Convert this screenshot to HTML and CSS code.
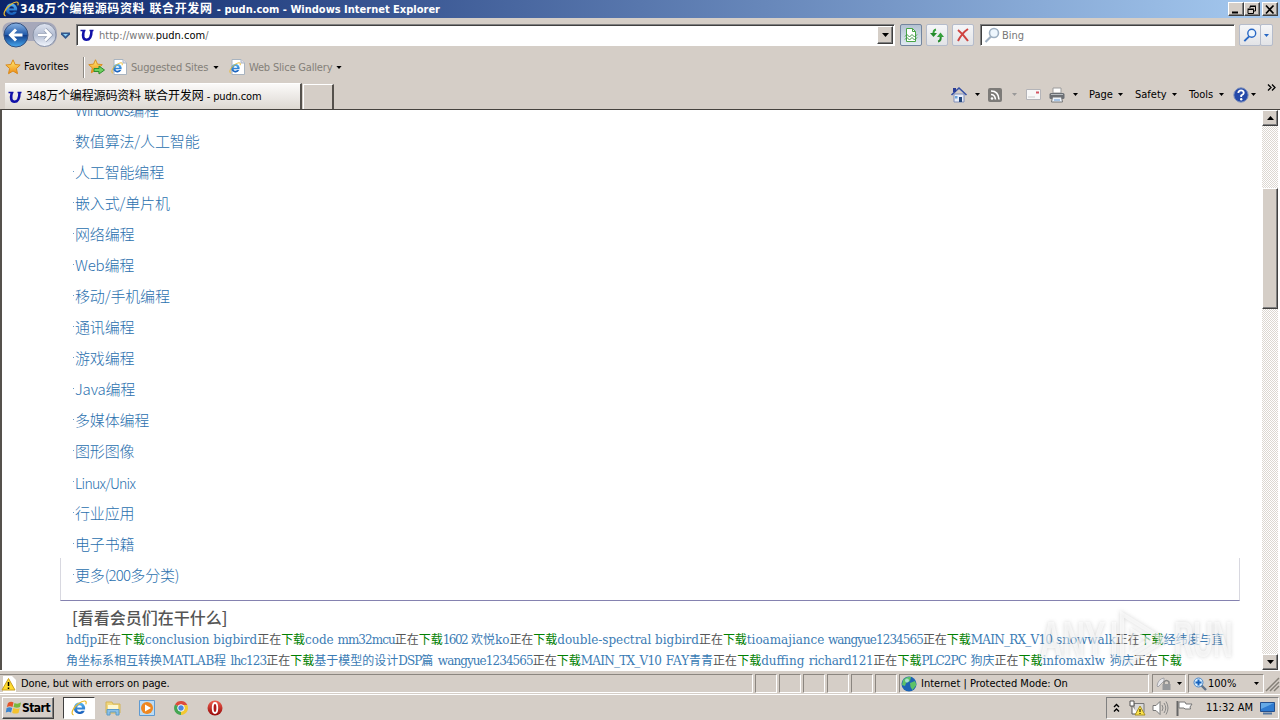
FILE: index.html
```
<!DOCTYPE html>
<html lang="zh-CN">
<head>
  <meta charset="UTF-8">
  <title>348万个编程源码资料 联合开发网 - pudn.com</title>
  <link rel="stylesheet" href="styles.css">
</head>
<body>
  <!-- shared icons -->
  <svg class="defs" width="0" height="0">
    <defs>
      <linearGradient id="blue" x1="0" y1="0" x2="0" y2="1"><stop offset="0" stop-color="#8ab4e4"/><stop offset=".48" stop-color="#245cab"/><stop offset=".52" stop-color="#123f8c"/><stop offset="1" stop-color="#48aaf0"/></linearGradient>
      <linearGradient id="pale" x1="0" y1="0" x2="0" y2="1"><stop offset="0" stop-color="#dfe5f1"/><stop offset=".5" stop-color="#b3bdd2"/><stop offset="1" stop-color="#f4f8ff"/></linearGradient>
      <linearGradient id="gold" x1="0" y1="0" x2="0" y2="1"><stop offset="0" stop-color="#fff07a"/><stop offset="1" stop-color="#f08a10"/></linearGradient>
      <linearGradient id="red" x1="0" y1="0" x2="0" y2="1"><stop offset="0" stop-color="#f06050"/><stop offset="1" stop-color="#960808"/></linearGradient>
      <linearGradient id="sky" x1="0" y1="0" x2="0" y2="1"><stop offset="0" stop-color="#58b8f4"/><stop offset="1" stop-color="#1459b8"/></linearGradient>
    </defs>
    <symbol id="ie" viewBox="0 0 16 16">
      <path fill-rule="evenodd" d="M8.500 2.500a5.700 5.700 0 0 1 5.600 7H6q.4 2.300 2.500 2.300 1.500 0 2.200-1.100h3.100a5.700 5.700 0 1 1-5.300-8.200M6.100 7.500h5Q10.700 5.200 8.600 5.200T6.100 7.500" fill="url(#sky)"/>
      <path d="M2.600 15C-.8 14 2 7.500 7 4S16.500-.6 14.800 4.400" fill="none" stroke="#e9b92e" stroke-width="1.200"/>
    </symbol>
    <symbol id="iepage" viewBox="0 0 16 16">
      <path d="M3 .5h9l3.500 3.500v11.500H3z" fill="#fff" stroke="#a9b4c0"/>
      <path d="M12 .5V4h3.500" fill="#dde" stroke="#a9b4c0"/>
      <use href="#ie" x="0" y="3" width="12" height="12"/>
    </symbol>
    <symbol id="star" viewBox="0 0 16 16">
      <path d="M8 .8l2.100 4.700 5.100.5-3.800 3.500 1.100 5.200L8 12l-4.500 2.700 1.100-5.200L.8 6l5.100-.5z" fill="url(#gold)" stroke="#d98a1c"/>
    </symbol>
    <symbol id="u" viewBox="0 0 14 14">
      <path d="M.5 2.500h5M9.500 2.500h4" fill="none" stroke="#1010a8" stroke-width="1.500"/>
      <path d="M3.800 2.500Q1.500 11.800 6.500 11.800T11.500 2.500" fill="none" stroke="#1010a8" stroke-width="2.600"/>
    </symbol>
    <symbol id="lens" viewBox="0 0 16 16">
      <path d="M7 9.500L1.500 15" stroke="currentColor" stroke-width="2.200"/>
      <circle cx="10" cy="6" r="4.500" fill="#eef6fd" stroke="currentColor" stroke-width="1.600"/>
    </symbol>
    <symbol id="down" viewBox="0 0 7 4"><path d="M0 0h7L3.500 4z" fill="currentColor"/></symbol>
  </svg>

  <header class="titlebar">
    <svg class="i16"><use href="#ie"/></svg>
    <h1>348万个编程源码资料 联合开发网 <span class="latin">- pudn.com - Windows Internet Explorer</span></h1>
    <div class="window-buttons">
      <button class="raised"><svg width="10" height="9"><path d="M1 7.500h6" stroke="#000" stroke-width="2"/></svg></button>
      <button class="raised"><svg width="10" height="9"><path d="M3 3V1.500h5.500V6H7M3 1h6M1 4.500h5.500V8.500H1zM.5 4h6.500" fill="none" stroke="#000"/></svg></button>
      <button class="raised close"><svg width="10" height="9"><path d="M1 .5l7.500 8M8.500.5L1 8.500" stroke="#000" stroke-width="1.700"/></svg></button>
    </div>
  </header>

  <nav class="navbar">
    <svg class="travel" width="74" height="30" viewBox="0 0 74 30">
      <path d="M14 2h30q12 0 12 12T44 27q-7 0-10-6h-8q-3 6-12 6T2 14 14 2" fill="#a6a8ba"/>
      <circle cx="15" cy="15" r="12" fill="url(#blue)" stroke="#34517f"/>
      <circle cx="43.500" cy="15" r="11.500" fill="url(#pale)" stroke="#8992a6"/>
      <path d="M21.500 15H9.500M15 9.500L9.500 15l5.500 5.500" fill="none" stroke="#fff" stroke-width="3"/>
      <path d="M37 15h12M44 9.500l5.500 5.500-5.500 5.500" fill="none" stroke="#8f9ab0" stroke-width="4"/>
      <path d="M37 15h12M44 9.500l5.500 5.500-5.500 5.500" fill="none" stroke="#fff" stroke-width="2.600"/>
      <path d="M60 12.500h9v2l-4.500 4.500-4.500-4.500z" fill="#31578c"/><path d="M62 14h5l-2.500 2.500z" fill="#8ad0f8"/>
    </svg>
    <div class="address sunken">
      <svg class="i14"><use href="#u"/></svg>
      <span class="url">http://www.<b>pudn.com</b>/</span>
      <button class="raised drop"><svg width="7" height="4"><use href="#down"/></svg></button>
    </div>
    <button class="tool pressed"><svg width="16" height="16"><path d="M3.500 1.500h6l3 3v10h-9z" fill="#fff" stroke="#48a545"/><path d="M9.500 1.500v3h3" fill="none" stroke="#48a545"/><path d="M2 9.500l2-2 2.500 2.500L9 7.500l2.500 2.500L14 7.500M2 12.500l2-2L6.500 13 9 10.500l2.500 2.500 2.500-2.500" fill="none" stroke="#3f9845"/></svg></button>
    <button class="tool"><svg width="16" height="16"><path d="M7 2.500Q4 3 4.500 8" fill="none" stroke="#35a03b" stroke-width="2"/><path d="M1 6h7L4.500 10z" fill="#258a2c"/><path d="M9 14.500q3.500-.5 2.500-6" fill="none" stroke="#258a2c" stroke-width="2"/><path d="M8 10h7l-3.500-4.500z" fill="#35a03b"/></svg></button>
    <button class="tool"><svg width="16" height="16"><path d="M3 3q5 4 10 11M13 2Q7 6 3 14" fill="none" stroke="#cf4340" stroke-width="2"/></svg></button>
    <div class="search sunken">
      <svg class="i16"><use href="#lens"/></svg>
      <span>Bing</span>
    </div>
    <div class="search-go">
      <button class="tool"><svg class="i14"><use href="#lens"/></svg></button>
      <button class="tool narrow"><svg width="5" height="3"><use href="#down"/></svg></button>
    </div>
  </nav>

  <div class="favorites">
    <svg class="i16"><use href="#star"/></svg>
    <span class="fav-label">Favorites</span>
    <i class="divider"></i>
    <svg class="add" width="17" height="16" viewBox="0 0 17 16"><use href="#star" width="15" height="15"/><path d="M6 9.500h5V7l5.500 4-5.500 4v-2.500H6z" fill="#6fd05f" stroke="#2c8e2d"/></svg>
    <svg class="i16"><use href="#iepage"/></svg>
    <span class="link suggested">Suggested Sites</span>
    <svg width="6" height="3"><use href="#down"/></svg>
    <svg class="i16 slice"><use href="#iepage"/></svg>
    <span class="link gallery">Web Slice Gallery</span>
    <svg width="6" height="3"><use href="#down"/></svg>
  </div>

  <div class="tabs">
    <div class="tab">
      <svg class="i14"><use href="#u"/></svg>
      <span>348万个编程源码资料 联合开发网 <span class="latin">- pudn.com</span></span>
    </div>
    <div class="new-tab"></div>
    <div class="commands">
      <svg width="16" height="16"><path d="M3 7h10v8H3z" fill="#e9eefb" stroke="#8290b8"/><path d="M.5 8L8 1l7.500 7" fill="none" stroke="#3550a5" stroke-width="1.600"/><path d="M2 1h3v4H2z" fill="#2a3d95"/><path d="M8 10h3v5H8z" fill="#24477c"/><path d="M4 9h2.500v2.500H4z" fill="#6aa4d9"/></svg>
      <svg class="arrow a-home" width="5" height="3"><use href="#down"/></svg>
      <svg class="feed" width="14" height="14"><rect width="14" height="14" rx="2" fill="#7d7b78"/><circle cx="4" cy="10.500" r="1.300" fill="#fff"/><path d="M3 6.500q4 0 4.500 5M3 3q7.500 0 8 8.500" fill="none" stroke="#fff" stroke-width="1.600"/></svg>
      <svg class="arrow dim a-feed" width="5" height="3"><use href="#down"/></svg>
      <svg class="mail" width="15" height="12"><path d="M.5.5h14v10H.5z" fill="#f8f8f8" stroke="#b4b4b8"/><path d="M2 8h7" stroke="#ccc"/><path d="M10 2.500h3v2h-3z" fill="#d45563"/></svg>
      <svg class="print" width="16" height="16"><path d="M4 1h8v5H4z" fill="#fff" stroke="#9b9b9b"/><rect x=".5" y="6" width="15" height="6" rx="1.500" fill="#6b6f75"/><path d="M2 7.500h12" stroke="#b9bdc0"/><path d="M3.500 10h9l1 5h-11z" fill="#eef4fb" stroke="#777"/><path d="M5 13h6" stroke="#5f93ce"/></svg>
      <svg class="arrow a-print" width="5" height="3"><use href="#down"/></svg>
      <span class="menu page">Page</span><svg class="arrow" width="5" height="3"><use href="#down"/></svg>
      <span class="menu safety">Safety</span><svg class="arrow" width="5" height="3"><use href="#down"/></svg>
      <span class="menu tools">Tools</span><svg class="arrow" width="5" height="3"><use href="#down"/></svg>
      <svg class="help" width="16" height="16"><circle cx="8" cy="8" r="7.200" fill="#254aa9" stroke="#8394bd"/><path d="M5.300 6q.2-2.700 2.800-2.700T10.800 6Q10.700 7.200 8.200 8.500v1.500" fill="none" stroke="#fff" stroke-width="1.800"/><circle cx="8.200" cy="12.200" r="1.200" fill="#fff"/></svg>
      <svg class="arrow a-help" width="5" height="3"><use href="#down"/></svg>
      <svg class="more" width="9" height="7"><path d="M1 .5l3 3-3 3M5 .5l3 3-3 3" fill="none" stroke="#000" stroke-width="1.300"/></svg>
    </div>
  </div>

  <div class="viewport">
    <main class="page-content">
      <ul class="categories">
        <li><a><span class="windows">Windows</span>编程</a></li>
        <li><a>数值算法/人工智能</a></li>
        <li><a>人工智能编程</a></li>
        <li><a>嵌入式/单片机</a></li>
        <li><a>网络编程</a></li>
        <li><a>Web编程</a></li>
        <li><a>移动/手机编程</a></li>
        <li><a>通讯编程</a></li>
        <li><a>游戏编程</a></li>
        <li><a>Java编程</a></li>
        <li><a>多媒体编程</a></li>
        <li><a>图形图像</a></li>
        <li><a class="linux">Linux/Unix</a></li>
        <li><a>行业应用</a></li>
        <li><a>电子书籍</a></li>
        <li class="last"><a>更多<span class="count">(200</span>多分类)</a></li>
      </ul>
      <h2>[看看会员们在干什么]</h2>
      <div class="activity">
        <p><a>hdfjp</a>正在<em>下载</em><a>conclusion</a> <a>bigbird</a>正在<em>下载</em><a>code</a> <a class="t2">mm32mcu</a>正在<em>下载</em><a class="t3">1602</a> <a>欢悦ko</a>正在<em>下载</em><a>double-spectral</a> <a>bigbird</a>正在<em>下载</em><a>tioamajiance</a> <a class="t2">wangyue1234565</a>正在<em>下载</em><a class="t1">MAIN_RX_V10</a> <a>snowwalk</a>正在<em>下载</em><a>经纬度与直</a></p>
        <p class="second"><a>角坐标系相互转换<span class="t0">MATLAB</span>程</a> <a class="t2">lhc123</a>正在<em>下载</em><a>基于模型的设计<span class="t2">DSP</span>篇</a> <a class="t2">wangyue1234565</a>正在<em>下载</em><a class="t1">MAIN_TX_V10</a> <a>FAY青青</a>正在<em>下载</em><a>duffing</a> <a class="t0">richard121</a>正在<em>下载</em><a class="t2">PLC2PC</a> <a>狗庆</a>正在<em>下载</em><a>infomaxlw</a> <a>狗庆</a>正在<em>下载</em></p>
      </div>
    </main>
    <div class="scrollbar">
      <button class="raised"><svg width="7" height="4"><path d="M0 4h7L3.500 0z"/></svg></button>
      <div class="thumb raised"></div>
      <button class="raised"><svg width="7" height="4"><use href="#down"/></svg></button>
    </div>
    <div class="watermark">
      <span class="any">ANY</span>
      <svg width="62" height="60" viewBox="0 0 62 60"><path d="M6 12v36M14 50V4l42 26-36 23" fill="none" stroke="currentColor" stroke-width="4"/><path d="M24 20v20l16-10z" fill="none" stroke="currentColor" stroke-width="3"/></svg>
      <span class="run">RUN</span>
    </div>
  </div>

  <footer class="statusbar">
    <div class="cell message">
      <svg width="16" height="16"><path d="M2 0h9l4 4v12H2z" fill="#fff"/><path d="M7.500 2.500L14 14H1z" fill="#ffdb2e" stroke="#c89e20"/><path d="M7.500 6v4M7.500 11.500v1.500" stroke="#000" stroke-width="1.500"/></svg>
      <span>Done, but with errors on page.</span>
    </div>
    <div class="cell"></div><div class="cell"></div><div class="cell"></div><div class="cell"></div><div class="cell"></div><div class="cell"></div>
    <div class="cell zone">
      <svg width="16" height="16"><circle cx="8" cy="8" r="7.500" fill="#1d63b4"/><path d="M2 4q4-4 8-3l-1 4-4 2-1 3-3-1zM9 7l5-2 1.500 4-4 5-2-3z" fill="#5dc267"/><circle cx="6" cy="4.500" r="2" fill="#c4ecf5" opacity=".7"/></svg>
      <span>Internet | Protected Mode: On</span>
    </div>
    <div class="cell lock">
      <svg width="16" height="16"><path d="M1 10Q2 3 8 2v3L2 11z" fill="#e8e8ec" stroke="#a4a4a8"/><path d="M8 8V6q2.500-3 5 0v2" fill="none" stroke="#858585" stroke-width="1.500"/><path d="M6.500 8h8v6h-8z" fill="#96989b"/></svg>
      <svg width="5" height="3"><use href="#down"/></svg>
    </div>
    <div class="cell zoom">
      <svg width="14" height="14"><path d="M8 8l5 5" stroke="#617289" stroke-width="2.400"/><circle cx="5.500" cy="5.500" r="4.500" fill="#d6ecfd" stroke="#4a86c8"/><path d="M5.500 2.500v6M2.500 5.500h6" stroke="#1762bd" stroke-width="2"/></svg>
      <span>100%</span>
      <svg width="5" height="3"><use href="#down"/></svg>
    </div>
    <svg class="grip" width="14" height="14"><path d="M1 14L14 1M5 14l9-9M9 14l5-5" stroke="#858078" stroke-width="1.500"/></svg>
  </footer>

  <footer class="taskbar">
    <button class="start raised">
      <svg width="16" height="15"><path d="M2 3q3-2 5.500-.5L6.500 7Q4 5.500.8 7z" fill="#e35429"/><path d="M8.500 3q3 1.500 6.500-.5L14 7q-3 1.500-6.500 0z" fill="#79b83b"/><path d="M.6 8q3-1.500 5.600 0L5 12.500Q3 11-.2 12.500z" fill="#3b84cf"/><path d="M7.200 8q3 1.500 6.500.3L12.500 13q-3.500 1.300-6.300-.3z" fill="#f4c22d"/></svg>
      <span>Start</span>
    </button>
    <div class="task active"><svg class="i16"><use href="#ie"/></svg></div>
    <svg class="app" width="16" height="16"><path d="M1 2h6l1 2h7v9H1z" fill="#f1d77c" stroke="#d3b458"/><path d="M3 5h10v4H3z" fill="#fdf7d2"/><path d="M2 15V9.500h12V15h-3v-3H5v3z" fill="#8bc1e8" stroke="#5b9bc9"/></svg>
    <svg class="app media" width="16" height="16"><path d="M.5.5h15v15H.5z" fill="#bcdcf5" stroke="#5f9ad1"/><circle cx="8" cy="8" r="6" fill="#ef8720"/><path d="M6 4.500l6 3.500-6 3.500z" fill="#fff"/></svg>
    <svg class="app chrome" width="16" height="16"><path d="M8 8L2 4.500A7 7 0 0 1 14.300 5H8z" fill="#dd4b3c"/><path d="M8 8V5h6.300A7 7 0 0 1 8 15z" fill="#f3c831"/><path d="M8 8v7A7 7 0 0 1 2 4.500z" fill="#45a652"/><circle cx="8" cy="8" r="3.300" fill="#4b86e0" stroke="#fff"/></svg>
    <svg class="app opera" width="16" height="16"><circle cx="8" cy="8" r="7.500" fill="url(#red)"/><ellipse cx="8" cy="8" rx="2.300" ry="5" fill="#b01818" stroke="#fff" stroke-width="1.800"/></svg>
    <div class="tray">
      <svg width="7" height="10"><path d="M1 4l2.500-2.500L6 4M1 8.500L3.500 6 6 8.500" fill="none" stroke="#000" stroke-width="1.400"/></svg>
      <svg class="net" width="16" height="16"><path d="M5 3.500h10v9H5z" fill="#d8d8d8" stroke="#777"/><path d="M1 1h4v5H1zM3 6v8h6" fill="#fff" stroke="#555"/><path d="M11 6l5 9H6z" fill="#fde34a" stroke="#a99022"/><path d="M11 9v3M11 13v1" stroke="#000"/></svg>
      <svg class="vol" width="17" height="16"><path d="M1 5.500h3L8 1.500v13l-4-4H1z" fill="#fff" stroke="#777"/><path d="M10 5q2 3 0 6M12 3q3.500 5 0 10M14 1.500q4 6.500 0 13" fill="none" stroke="#888"/></svg>
      <svg class="flag" width="17" height="16"><path d="M1.500 1v15" stroke="#666" stroke-width="2"/><path d="M3 2h6l1 2h6l-2 3 .5 2H9L8 8H3z" fill="#fff" stroke="#777"/></svg>
      <span class="clock">11:32 AM</span>
      <svg class="desk" width="15" height="14"><path d="M.5 1.500h14v9H.5z" fill="#2f7bd0" stroke="#244f8d"/><path d="M1 2h13L1 8z" fill="#64a9e6"/><path d="M3 12.500h9" stroke="#5577a0" stroke-width="2"/></svg>
    </div>
  </footer>
</body>
</html>
```
FILE: styles.css
```
* {
  box-sizing: border-box;
}

body {
  margin: 0;
  width: 1280px;
  height: 720px;
  overflow: hidden;
  display: flex;
  flex-direction: column;
  background: #d5cec7;
  color: #000;
  font: 11px/14px "DejaVu Sans Condensed", "Noto Sans CJK SC", sans-serif;
  white-space: nowrap;
}

svg {
  display: block;
  flex: none;
  overflow: visible;
}

.defs {
  position: absolute;
}

button {
  display: flex;
  align-items: center;
  justify-content: center;
  flex: none;
  padding: 0;
  font: inherit;
  color: inherit;
}

.i14 { width: 14px; height: 14px; }
.i16 { width: 16px; height: 16px; }

.raised {
  background: #d5cec7;
  border: 1px solid;
  border-color: #fff #404040 #404040 #fff;
  box-shadow: inset -1px -1px #808080;
}

.sunken {
  display: flex;
  align-items: center;
  background: #fff;
  border: 1px solid;
  border-color: #808080 #fff #fff #808080;
  box-shadow: inset 1px 1px #404040;
}

/* title bar */
.titlebar {
  display: flex;
  align-items: center;
  height: 18px;
  flex: none;
  padding: 0 2px 0 3px;
  background: linear-gradient(90deg, #0a246a, #a6caf0);
  color: #fff;
}

.titlebar h1 {
  flex: 1;
  margin: 0 0 0 1px;
  font-size: 12px;
  line-height: 18px;
  letter-spacing: .6px;
}

.titlebar .latin {
  font-size: 11px;
  letter-spacing: 0;
}

.window-buttons {
  display: flex;
}

.window-buttons button {
  width: 16px;
  height: 14px;
}

.window-buttons .close {
  margin-left: 2px;
}

/* address row */
.navbar {
  display: flex;
  align-items: center;
  height: 34px;
  flex: none;
  padding-left: 1px;
}

.address {
  width: 819px;
  height: 22px;
  margin-left: 1px;
  padding: 1px 1px 1px 3px;
}

.url {
  flex: 1;
  margin-left: 5px;
  padding-top: 2px;
  color: #777;
}

.url b {
  color: #000;
  font-weight: normal;
}

.drop {
  width: 16px;
  height: 18px;
}

.tool {
  width: 22px;
  height: 22px;
  margin-left: 4px;
  background: linear-gradient(#f5f6f8, #e2e3e6);
  border: 1px solid #b5bccb;
  border-radius: 2px;
}

.tool.pressed {
  background: linear-gradient(#b4c2d2, #dfe9f0);
  border-color: #73859f;
}

.search {
  width: 255px;
  height: 22px;
  margin-left: 6px;
  padding-left: 3px;
  color: #777;
}

.search span {
  margin-left: 2px;
  padding-top: 2px;
}

.search svg {
  color: #9fb0c2;
}

.search-go {
  display: flex;
  margin-left: 4px;
  color: #2767c4;
}

.search-go .tool {
  margin: 0;
}

.search-go .narrow {
  width: 13px;
  margin-left: -1px;
}

.address + .tool {
  margin-left: 5px;
}

/* favorites row */
.favorites {
  display: flex;
  align-items: center;
  height: 30px;
  flex: none;
  padding-left: 5px;
}

.fav-label {
  width: 59px;
  margin-left: 3px;
}

.divider {
  width: 2px;
  height: 21px;
  border-left: 1px solid #8d8983;
  border-right: 1px solid #fff;
}

.add {
  margin: 0 6px 0 3px;
}

.link {
  color: #848079;
  letter-spacing: -.18px;
  padding-top: 1px;
}

.suggested {
  width: 82px;
  margin-left: 4px;
}

.slice {
  margin-left: 10px;
}

.gallery {
  width: 87px;
  margin-left: 4px;
}

/* tab row */
.tabs {
  display: flex;
  align-items: flex-end;
  height: 27px;
  flex: none;
  padding-left: 5px;
}

.tab {
  display: flex;
  align-items: center;
  width: 298px;
  height: 26px;
  padding-left: 3px;
  background: linear-gradient(#fbfaf9, #ddd8d2);
  border-top: 1px solid #fff;
  border-right: 2px solid #55514c;
}

.tab > span {
  margin-left: 4px;
  font-size: 12px;
  letter-spacing: -.15px;
}

.tab .latin {
  font-size: 11px;
}

.new-tab {
  width: 31px;
  height: 25px;
  margin-left: 1px;
  border: 1px solid #fff;
  border-right: 2px solid #55514c;
  border-bottom: 0;
}

.commands {
  display: flex;
  align-items: center;
  flex: 1;
  height: 27px;
  padding: 0 4px 2px 617px;
}

.menu { padding-top: 1px; }
.arrow { margin-left: 5px; }
.dim { color: #999; }
.a-home { margin-left: 8px; }
.feed { margin-left: 8px; }
.a-feed { margin-left: 10px; }
.mail { margin-left: 9px; }
.print { margin-left: 8px; }
.a-print { margin-left: 8px; }
.page { width: 24px; margin-left: 11px; }
.safety { width: 32px; margin-left: 12px; }
.tools { width: 25px; margin-left: 12px; }
.help { margin-left: 9px; }
.a-help { margin-left: 2px; }
.more { margin: -14px 0 0 11px; }

/* page */
.viewport {
  position: relative;
  display: flex;
  height: 561px;
  flex: none;
  overflow: hidden;
  background: #fff;
  border: solid #55514c;
  border-width: 1px 0 0 2px;
  border-top-color: #45423e;
}

.page-content {
  width: 1260px;
  height: 560px;
  padding-left: 58px;
  overflow: hidden;
}

.categories {
  width: 1180px;
  margin: -16px 0 0;
  padding: 0;
  list-style: none;
  font: 15px/31px "Noto Sans CJK SC", sans-serif;
  font-weight: 300;
  letter-spacing: -.16px;
  color: #2a70ae;
}

.categories li {
  display: flex;
  align-items: center;
  height: 31px;
  padding-left: 13px;
}

/* small dot in front of every category */
.categories li::before {
  content: "";
  width: 1px;
  height: 1px;
  margin-right: 1px;
  background: #6a9cc8;
}

.categories .windows {
  letter-spacing: -1.1px;
}

.categories .linux {
  font-size: 14px;
  letter-spacing: -.75px;
  padding-top: 3px;
}

.categories .count {
  letter-spacing: -.8px;
}

.categories .last {
  height: 43px;
  margin-top: -1px;
  padding: 0 0 9px 12px;
  border: 1px solid #d8d8e0;
  border-top: 0;
  border-bottom-color: #8582b0;
}

h2 {
  margin: 4px 0 0 12px;
  color: #555;
  font: 500 16px/24px "Noto Sans CJK SC", sans-serif;
}

.activity {
  width: 1170px;
  margin-left: 6px;
  padding-top: 1px;
  font: 12px/21px "DejaVu Serif", "Noto Sans CJK SC", serif;
  color: #555;
}

.activity p {
  margin: 0;
  letter-spacing: -.035px;
}

.activity .second {
  letter-spacing: 0;
  word-spacing: .7px;
}

.activity a {
  color: #3b7cb5;
}

.activity em {
  color: #008000;
  font-style: normal;
}

/* tighter tracking for names with capitals and digits */
.t0 { letter-spacing: -.3px; }
.t1 { letter-spacing: -.75px; }
.t2 { letter-spacing: -.93px; }
.t3 { letter-spacing: -1.5px; }

.scrollbar {
  display: flex;
  flex-direction: column;
  width: 16px;
  background: repeating-conic-gradient(#fff 0 25%, #dcd7d1 0 50%) 0 0 / 2px 2px;
}

.scrollbar button {
  width: 16px;
  height: 16px;
}

.thumb {
  height: 121px;
  margin: 62px 0 345px;
}

.watermark {
  position: absolute;
  left: 1038px;
  top: 500px;
  display: flex;
  align-items: center;
  color: rgba(255, 255, 255, .6);
  font: bold 50px/60px "Liberation Sans", sans-serif;
  filter: drop-shadow(0 0 2px rgba(70, 70, 70, .35));
}

.watermark span {
  transform-origin: 0 50%;
}

.watermark .any {
  width: 68px;
  transform: scaleX(.62);
}

.watermark .run {
  width: 60px;
  margin-left: 4px;
  transform: scaleX(.54);
}

/* status bar */
.statusbar {
  display: flex;
  align-items: center;
  height: 24px;
  flex: none;
  padding-top: 2px;
  border-top: 1px solid #fff;
}

.cell {
  display: flex;
  align-items: center;
  width: 22px;
  height: 19px;
  margin-right: 2px;
  flex: none;
  border: 1px solid;
  border-color: #8b8680 #fff #fff #8b8680;
}

.message {
  width: 753px;
  padding-left: 1px;
  border-left: 0;
}

.message span {
  margin-left: 4px;
  letter-spacing: -.1px;
}

.zone {
  width: 250px;
  padding-left: 1px;
}

.zone span {
  margin-left: 4px;
}

.lock {
  width: 34px;
  margin-left: 1px;
  padding-left: 3px;
  gap: 5px;
}

.zoom {
  width: 76px;
  padding-left: 4px;
}

.zoom span {
  width: 46px;
  margin-left: 1px;
}

.grip {
  margin-left: -1px;
}

/* taskbar */
.taskbar {
  display: flex;
  align-items: center;
  height: 26px;
  flex: none;
  padding-left: 2px;
  border-top: 1px solid #fff;
}

.start {
  width: 52px;
  height: 22px;
  font-weight: bold;
  font-size: 12px;
  letter-spacing: -.5px;
}

.task {
  display: flex;
  align-items: center;
  justify-content: center;
  width: 32px;
  height: 22px;
  margin-left: 9px;
  background: #fff;
  border: 1px solid;
  border-color: #404040 #fff #fff #404040;
}

.app {
  margin-left: 10px;
}

.media { margin-left: 18px; }
.chrome { margin-left: 18px; }
.opera { margin-left: 18px; }

.tray {
  display: flex;
  align-items: center;
  width: 173px;
  height: 22px;
  margin: 0 1px 0 auto;
  padding-left: 6px;
  border: 1px solid;
  border-color: #808080 #fff #fff #808080;
}

.net { margin-left: 9px; }
.vol { margin-left: 7px; }
.flag { margin-left: 7px; }

.clock {
  width: 47px;
  margin-left: 13px;
}

.desk {
  margin-left: 7px;
}
```
